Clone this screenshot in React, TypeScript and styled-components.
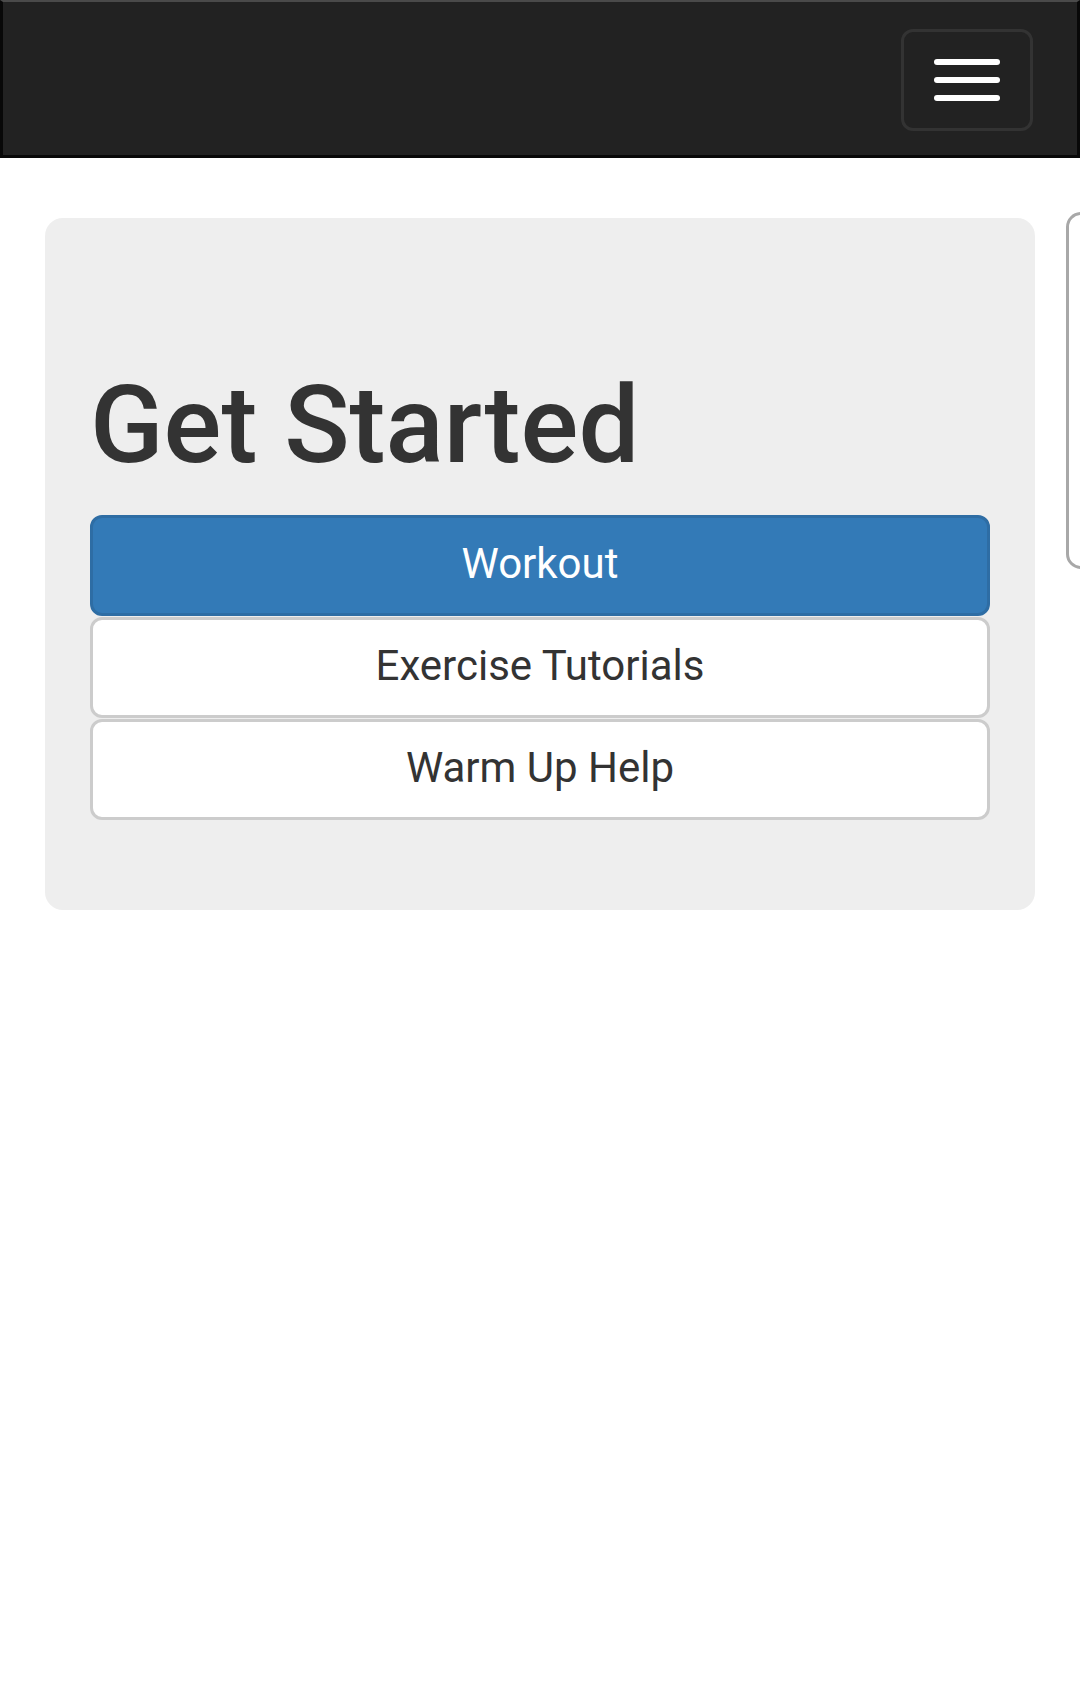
import styled, { createGlobalStyle } from "styled-components";

const GlobalStyle = createGlobalStyle`
  html, body {
    margin: 0;
    padding: 0;
    background: #fff;
    overflow-x: hidden;
  }
  body {
    font-family: Roboto, "Liberation Sans", Arial, sans-serif;
    color: #333;
  }
  * {
    box-sizing: border-box;
  }
`;

const Navbar = styled.nav`
  height: 158px;
  background: #222;
  border: 3px solid #080808;
  border-top: 2px solid #4a4a4a;
  display: flex;
  justify-content: flex-end;
  align-items: flex-start;
  padding: 27px 44px 0 0;
`;

const Toggle = styled.button`
  width: 132px;
  height: 102px;
  background: transparent;
  border: 3px solid #333;
  border-radius: 12px;
  padding: 0;
  display: flex;
  flex-direction: column;
  align-items: center;
  justify-content: center;
  gap: 12px;
  cursor: pointer;
`;

const IconBar = styled.span`
  display: block;
  width: 66px;
  height: 6px;
  border-radius: 3px;
  background: #fff;
`;

const Container = styled.main`
  padding: 60px 0 0 45px;
  overflow: hidden;
`;

const Row = styled.div`
  display: flex;
  align-items: flex-start;
  gap: 31px;
`;

const Jumbotron = styled.section`
  flex: 0 0 990px;
  background: #eee;
  border-radius: 18px;
  padding: 90px 45px;
`;

const Title = styled.h1`
  margin: 57px 0 30px;
  font-size: 108px;
  line-height: 120px;
  font-weight: 500;
  color: #333;
`;

const ButtonList = styled.div`
  display: flex;
  flex-direction: column;
  gap: 1px;
`;

const Button = styled.a<{ $primary?: boolean }>`
  display: flex;
  align-items: center;
  justify-content: center;
  height: 101px;
  border-radius: 12px;
  border: 3px solid ${(p) => (p.$primary ? "#2e6da4" : "#ccc")};
  background: ${(p) => (p.$primary ? "#337ab7" : "#fff")};
  color: ${(p) => (p.$primary ? "#fff" : "#333")};
  font-size: 42px;
  font-weight: 400;
  text-decoration: none;
  padding-bottom: 4px;
  cursor: pointer;
`;

const SidePanel = styled.aside`
  flex: 0 0 300px;
  height: 357px;
  margin-top: -6px;
  background: #fff;
  border: 3px solid #a8a8a8;
  border-radius: 15px;
`;

const App = () => {
  return (
    <>
      <GlobalStyle />
      <Navbar>
        <Toggle aria-label="Toggle navigation">
          <IconBar />
          <IconBar />
          <IconBar />
        </Toggle>
      </Navbar>
      <Container>
        <Row>
          <Jumbotron>
            <Title>Get Started</Title>
            <ButtonList>
              <Button $primary href="#">Workout</Button>
              <Button href="#">Exercise Tutorials</Button>
              <Button href="#">Warm Up Help</Button>
            </ButtonList>
          </Jumbotron>
          <SidePanel />
        </Row>
      </Container>
    </>
  );
};

export default App;
